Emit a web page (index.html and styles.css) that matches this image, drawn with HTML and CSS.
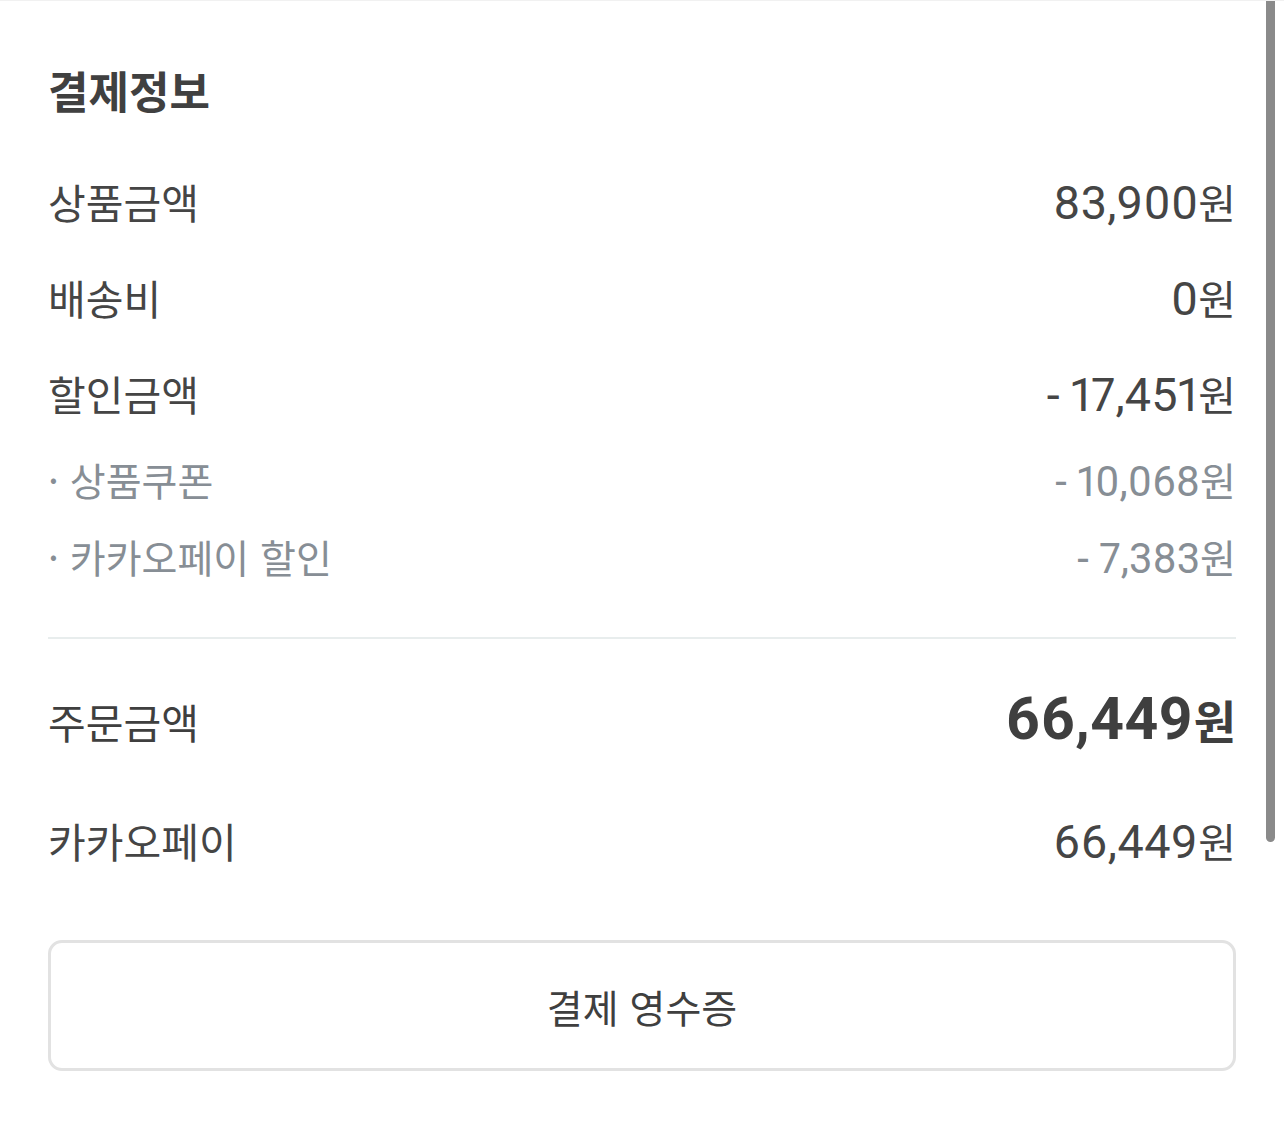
FILE: index.html
```html
<!DOCTYPE html>
<html lang="ko">
<head>
<meta charset="utf-8">
<title>결제정보</title>
<link rel="stylesheet" href="styles.css">
</head>
<body>
<div class="page">
  <section class="pay">
    <h2 class="title">결제정보</h2>
    <div class="row"><span class="label">상품금액</span><span class="amount"><span class="num">83,900</span>원</span></div>
    <div class="row"><span class="label">배송비</span><span class="amount"><span class="num">0</span>원</span></div>
    <div class="row"><span class="label">할인금액</span><span class="amount"><span class="num">- 17,451</span>원</span></div>
    <div class="row sub"><span class="label">· 상품쿠폰</span><span class="amount"><span class="num">- 10,068</span>원</span></div>
    <div class="row sub"><span class="label">· 카카오페이 할인</span><span class="amount"><span class="num">- 7,383</span>원</span></div>
    <hr class="divider">
    <div class="row total"><span class="label">주문금액</span><span class="amount"><span class="num">66,449</span>원</span></div>
    <div class="row method"><span class="label">카카오페이</span><span class="amount"><span class="num">66,449</span>원</span></div>
    <button class="receipt" type="button">결제 영수증</button>
  </section>
  <div class="scrollbar"></div>
</div>
</body>
</html>
```

FILE: styles.css
```css
* { box-sizing: border-box; }
html, body {
  margin: 0;
  padding: 0;
  background: #ffffff;
}
body {
  font-family: "Noto Sans CJK KR", "Noto Sans", sans-serif;
  color: #444444;
}
.page {
  position: relative;
  width: 1284px;
  height: 1126px;
  border-top: 1px solid #f1f1f1;
  overflow: hidden;
}
.pay {
  display: flex;
  flex-direction: column;
  padding: 59px 48px 0 48px;
}
.title {
  margin: 0;
  height: 60px;
  line-height: 60px;
  font-size: 44px;
  font-weight: 700;
  color: #404040;
}
.row {
  display: flex;
  justify-content: space-between;
  align-items: baseline;
  height: 96px;
  line-height: 96px;
  font-size: 41px;
  color: #454545;
}
.pay .title + .row { margin-top: 33px; }
.amount { white-space: pre; }
.num {
  font-family: "Roboto", "Noto Sans CJK KR", sans-serif;
  font-size: 1.14em;
  letter-spacing: 0.2px;
  word-spacing: -1px;
  font-variant-numeric: proportional-nums;
}
.row.sub {
  height: 77px;
  line-height: 77px;
  font-size: 39px;
  color: #878e95;
}
.row.sub .num {
  font-size: 1.07em;
  letter-spacing: 0;
  word-spacing: 0;
}
.divider {
  margin: 42px 0 0 0;
  border: 0;
  height: 2px;
  background: #e8eded;
}
.row.total {
  margin-top: 40px;
  height: 80px;
  line-height: 80px;
  color: #3f3f3f;
}
.row.total .amount {
  font-weight: 700;
  font-size: 46px;
}
.row.total .num {
  font-size: 1.28em;
  letter-spacing: 0.5px;
}
.row.method {
  margin-top: 41px;
  height: 80px;
  line-height: 80px;
}
.row.method .num { letter-spacing: 0.5px; }
.receipt {
  margin-top: 60px;
  height: 131px;
  width: 100%;
  border: 3px solid #e2e2e2;
  border-radius: 14px;
  background: #ffffff;
  font-family: "Noto Sans CJK KR", "Noto Sans", sans-serif;
  font-size: 39px;
  color: #3f3f3f;
  padding: 0;
}
.scrollbar {
  position: absolute;
  top: 0;
  right: 9px;
  width: 9px;
  height: 841px;
  background: #8a8a8a;
  border-radius: 0 0 5px 5px;
}
```
